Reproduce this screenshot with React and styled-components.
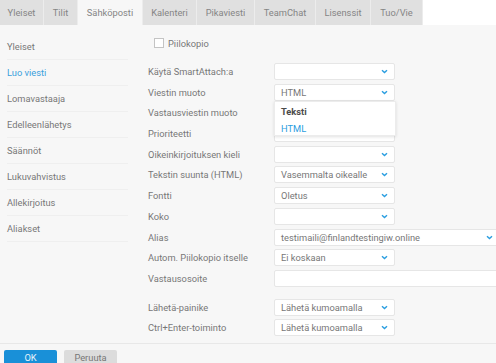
import styled, { createGlobalStyle } from 'styled-components'

const Global = createGlobalStyle`
  html, body { margin: 0; padding: 0; }
  body {
    width: 496px;
    height: 363px;
    overflow: hidden;
    background: #f7f7f7;
    font-family: Roboto, "Liberation Sans", sans-serif;
    font-size: 9.3px;
    color: #777;
  }
`

const Page = styled.div`
  display: flex;
  flex-direction: column;
  height: 363px;
`

const TabBar = styled.div`
  display: flex;
  height: 25px;
  background: #fff;
  flex-shrink: 0;
`

const Tab = styled.div`
  display: flex;
  align-items: center;
  justify-content: center;
  width: ${p => p.w}px;
  background: ${p => (p.active ? '#f7f7f7' : '#e0e0e0')};
  border-right: 1px solid #ececec;
  color: #858585;
`

const Main = styled.div`
  display: flex;
  height: 318px;
  flex-shrink: 0;
  overflow: hidden;
`

const Sidebar = styled.ul`
  list-style: none;
  margin: 0;
  padding: 9px 0 0 7px;
  width: 121px;
  flex-shrink: 0;
`

const SideItem = styled.li`
  height: 26px;
  display: flex;
  align-items: center;
  border-bottom: 1px solid #efefef;
  box-sizing: border-box;
  color: ${p => (p.active ? '#3aa0dc' : '#777')};
`

const Form = styled.div`
  padding: 12px 0 0 20px;
  flex: 1;
  min-width: 0;
`

const CheckRow = styled.label`
  display: flex;
  align-items: center;
  gap: 4px;
  height: 12px;
  margin: 0 0 14px 6px;
`

const Box = styled.span`
  width: 8px;
  height: 8px;
  border: 1px solid #c4c4c4;
  background: #fff;
`

const Grid = styled.div`
  display: grid;
  grid-template-columns: 126px auto;
  row-gap: 3.7px;
  align-items: center;
`

const Label = styled.div`
  height: 17px;
  line-height: 17px;
  white-space: nowrap;
  margin-top: ${p => p.gapTop || 0}px;
`

const Field = styled.div`
  position: relative;
  box-sizing: border-box;
  height: 17px;
  width: ${p => p.w || 121}px;
  margin-top: ${p => p.gapTop || 0}px;
  background: #fff;
  border: 1px solid #e6e6e6;
  border-radius: 2px;
  display: flex;
  align-items: center;
  padding: 0 6px;
  white-space: nowrap;
`

const Chevron = styled.svg`
  position: absolute;
  right: 6px;
  top: 5px;
`

const Menu = styled.div`
  position: absolute;
  left: -1px;
  top: 16px;
  width: 122px;
  box-sizing: border-box;
  height: 35px;
  background: #fff;
  border: 1px solid #ececec;
  box-shadow: 0 1px 3px rgba(0, 0, 0, 0.12);
  z-index: 2;
  padding-top: 1px;
`

const Option = styled.div`
  height: 17px;
  line-height: 17px;
  padding-left: 6px;
  font-weight: ${p => (p.bold ? 700 : 400)};
  color: ${p => (p.blue ? '#2b9ee0' : '#4a4a4a')};
`

const Footer = styled.div`
  flex: 1;
  border-top: 1px solid #e8e8e8;
  padding: 6px 0 0 4px;
  display: flex;
  gap: 7px;
`

const Button = styled.button`
  width: 53px;
  height: 20px;
  border: none;
  border-radius: 2px;
  font-family: inherit;
  font-size: 9.3px;
  background: ${p => (p.primary ? '#1990d8' : '#dcdcdc')};
  color: ${p => (p.primary ? '#e6f3fb' : '#777')};
  padding: 0 0 6px;
`

const tabs = [
  ['Yleiset', 43],
  ['Tilit', 33],
  ['Sähköposti', 64],
  ['Kalenteri', 53],
  ['Pikaviesti', 57],
  ['TeamChat', 60],
  ['Lisenssit', 54],
  ['Tuo/Vie', 51],
]

const sideItems = ['Yleiset', 'Luo viesti', 'Lomavastaaja', 'Edelleenlähetys', 'Säännöt', 'Lukuvahvistus', 'Allekirjoitus', 'Aliakset']

const rows = [
  { label: 'Käytä SmartAttach:a', value: '' },
  { label: 'Viestin muoto', value: 'HTML', open: true },
  { label: 'Vastausviestin muoto', value: '' },
  { label: 'Prioriteetti', value: '' },
  { label: 'Oikeinkirjoituksen kieli', value: '' },
  { label: 'Tekstin suunta (HTML)', value: 'Vasemmalta oikealle' },
  { label: 'Fontti', value: 'Oletus' },
  { label: 'Koko', value: '' },
  { label: 'Alias', value: 'testimaili@finlandtestingiw.online', w: 226 },
  { label: 'Autom. Piilokopio itselle', value: 'Ei koskaan' },
  { label: 'Vastausosoite', value: '', w: 226, input: true },
  { label: 'Lähetä-painike', value: 'Lähetä kumoamalla', gapTop: 8 },
  { label: 'Ctrl+Enter-toiminto', value: 'Lähetä kumoamalla' },
]

const Down = () => (
  <Chevron width="7" height="5" viewBox="0 0 7 5">
    <path d="M1 1.2 L3.5 3.6 L6 1.2" fill="none" stroke="#2b9ee0" strokeWidth="1.4" />
  </Chevron>
)

function App() {
  return (
    <Page>
      <Global />
      <TabBar>
        {tabs.map(([name, w], i) => (
          <Tab key={name} w={w} active={i === 2}>{name}</Tab>
        ))}
      </TabBar>
      <Main>
        <Sidebar>
          {sideItems.map((s, i) => (
            <SideItem key={s} active={i === 1}>{s}</SideItem>
          ))}
        </Sidebar>
        <Form>
          <CheckRow>
            <Box />
            Piilokopio
          </CheckRow>
          <Grid>
            {rows.map(r => [
              <Label key={r.label + 'l'} gapTop={r.gapTop}>{r.label}</Label>,
              <Field key={r.label + 'f'} w={r.w} gapTop={r.gapTop}>
                {r.value}
                {!r.input && <Down />}
                {r.open && (
                  <Menu>
                    <Option bold>Teksti</Option>
                    <Option blue>HTML</Option>
                  </Menu>
                )}
              </Field>,
            ])}
          </Grid>
        </Form>
      </Main>
      <Footer>
        <Button primary>OK</Button>
        <Button>Peruuta</Button>
      </Footer>
    </Page>
  )
}

export default App
